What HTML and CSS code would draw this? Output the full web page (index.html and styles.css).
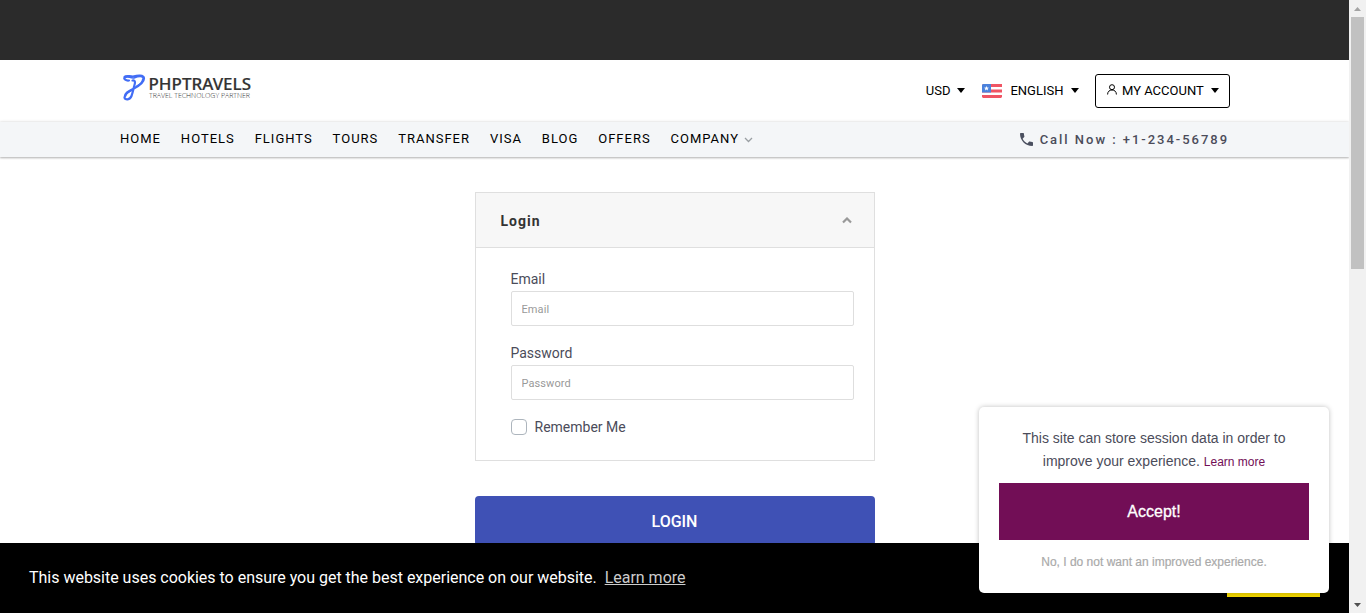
FILE: index.html
```
<!DOCTYPE html>
<html lang="en">
<head>
<meta charset="utf-8">
<title>Login</title>
<link rel="stylesheet" href="styles.css">
</head>
<body>
<div class="page">
  <div class="topbar"></div>
  <header class="header">
    <a class="logo">
      <svg width="132" height="32" viewBox="0 0 132 32">
        <g fill="none" stroke="#426df5" stroke-linecap="round" stroke-linejoin="round">
          <path stroke-width="2.200" d="M8 9.500C5 10 2.500 8 3.500 6C5 4 8 5.500 12 5.500C16 4.500 23 3.500 23 7.500C23 12 18 15 12 18C7 20.500 3.500 22.500 3.500 26.500C4 29.500 9 29 10.500 25C12 21 12.500 17 13.500 14C14.500 11 14 9 11.500 9.500"/>
          <path stroke-width="1.600" d="M4 6.500C7 4.500 9 7.500 13 7C17 5.500 20 4.500 22 6.500M16 15C19 13.500 21.500 10.500 21.800 8M4.500 25C5 22.500 7 21 11 19"/>
        </g>
        <text class="logo-name" x="27.500" y="19" textLength="102.500" lengthAdjust="spacingAndGlyphs">PHPTRAVELS</text>
        <text class="logo-tag" x="28" y="27" textLength="101" lengthAdjust="spacingAndGlyphs">TRAVEL TECHNOLOGY PARTNER</text>
      </svg>
    </a>
    <div class="tools">
      <span class="currency">USD <i class="caret"></i></span>
      <span class="language">
        <svg class="flag" width="20" height="14" viewBox="0 0 20 14"><rect width="20" height="14" rx="1" fill="#fff"/><path fill="#f05564" d="M1 0h19v3H0V1zM0 5.500h20v3H0zM0 11h20v2l-1 1H1l-1-1z"/><path fill="#4b82dc" d="M1 0h8v8.500H0V1z"/><path fill="#fff" d="M4.500 2l.7 1.600 1.800.1-1.400 1.100.5 1.700-1.600-1-1.600 1 .5-1.700L2 3.700l1.800-.1z"/></svg>
        ENGLISH <i class="caret"></i>
      </span>
      <a class="account">
        <svg width="10" height="12" viewBox="0 0 10 12" fill="none" stroke="#000"><circle cx="5" cy="3.200" r="2.500"/><path d="M.6 10.500C.6 7.500 2.500 6 5 6s4.400 1.500 4.400 4.500"/></svg>
        MY ACCOUNT <i class="caret"></i>
      </a>
    </div>
  </header>
  <nav class="nav">
    <div class="menu">
      <a>HOME</a><a>HOTELS</a><a>FLIGHTS</a><a>TOURS</a><a>TRANSFER</a><a>VISA</a><a>BLOG</a><a>OFFERS</a>
      <a>COMPANY<svg class="chevron" width="9" height="6" viewBox="0 0 9 6" fill="none" stroke="#9a9fa3" stroke-width="1.300"><path d="M1 1l3.500 3.500L8 1"/></svg></a>
    </div>
    <div class="phone">
      <svg width="14" height="14" viewBox="3 3 18 18" fill="#4b5060"><path d="M6.620 10.790c1.440 2.830 3.760 5.140 6.590 6.590l2.200-2.200c.27-.27.67-.36 1.020-.24 1.120.37 2.330.57 3.570.57.55 0 1 .45 1 1V20c0 .55-.45 1-1 1C10.610 21 3 13.390 3 4c0-.55.45-1 1-1h3.500c.55 0 1 .45 1 1 0 1.250.2 2.450.57 3.570.11.35.03.74-.25 1.020z"/></svg>
      Call Now : +1-234-56789
    </div>
  </nav>
  <main class="main">
    <form class="login">
      <section class="card">
        <div class="card-head">
          <h1>Login</h1>
          <svg width="10" height="7" viewBox="0 0 10 7" fill="none" stroke="#999" stroke-width="2.200"><path d="M1 5.500l4-4 4 4"/></svg>
        </div>
        <div class="card-body">
          <label for="email">Email</label>
          <input id="email" class="field" type="text" placeholder="Email">
          <label for="password">Password</label>
          <input id="password" class="field" type="password" placeholder="Password">
          <div class="remember"><span class="box"></span>Remember Me</div>
        </div>
      </section>
      <button class="submit" type="button">LOGIN</button>
    </form>
  </main>
  <div class="cookie-bar">
    <span class="cookie-text">This website uses cookies to ensure you get the best experience on our website. <a>Learn more</a></span>
    <span class="got-it"></span>
  </div>
  <aside class="consent">
    <p>This site can store session data in order to improve your experience. <a>Learn more</a></p>
    <button class="accept" type="button">Accept!</button>
    <a class="decline">No, I do not want an improved experience.</a>
  </aside>
</div>
<div class="scrollbar">
  <svg width="17" height="17"><path fill="#a3a3a3" d="M5 11h7L8.500 7z"/></svg>
  <div class="thumb"></div>
  <svg class="down" width="17" height="17"><path fill="#505050" d="M5 7h7l-3.500 4z"/></svg>
</div>
</body>
</html>
```
FILE: styles.css
```
* { box-sizing: border-box; }
body {
  margin: 0;
  height: 613px;
  display: flex;
  overflow: hidden;
  background: #fff;
  font-family: Roboto, sans-serif;
  color: #4b4c5a;
}
.page { position: relative; width: 1349px; height: 613px; overflow: hidden; }
.topbar { height: 60px; background: #2b2b2b; }
.header {
  height: 62px;
  padding: 0 119px 1px 121px;
  display: flex;
  justify-content: space-between;
  align-items: center;
}
.logo { height: 32px; margin-top: -7px; }
.logo svg { display: block; }
.logo-name { font: 500 17px "Noto Sans", sans-serif; fill: #333; stroke: #333; stroke-width: .2px; }
.logo-tag { font: 300 7px "Open Sans", sans-serif; fill: #333; }
.tools { display: flex; align-items: center; font-size: 13px; color: #000; }
.currency, .language, .account { display: flex; align-items: center; }
.caret {
  border: 4px solid transparent;
  border-top: 5px solid #000;
  border-bottom: 0;
  margin-left: 7px;
}
.currency { margin-right: 16.500px; }
.flag { margin-right: 8.500px; }
.language { margin-right: 16.500px; }
.account {
  width: 135px;
  height: 34px;
  padding-left: 11px;
  border: 1px solid #000;
  border-radius: 3px;
}
.account svg { margin: -2px 5px 0 0; }
.nav {
  height: 35px;
  padding: 0 120px;
  display: flex;
  justify-content: space-between;
  align-items: center;
  background: #f4f6f8;
  box-shadow: 0 0 3px rgba(0, 0, 0, .15), 0 1px 2px rgba(0, 0, 0, .25);
}
.menu { display: flex; gap: 19.900px; padding-bottom: 2px; font-size: 13px; letter-spacing: 1px; color: #000; }
.chevron { margin-left: 5px; }
.phone {
  display: flex;
  align-items: center;
  gap: 7px;
  font-size: 13px;
  font-weight: 500;
  letter-spacing: 1.970px;
}
.phone svg { width: 13px; height: 13px; }
.main { display: flex; justify-content: center; padding-top: 35px; }
.login { width: 400px; }
.card { height: 269px; border: 1px solid #dfdfdf; }
.card-head {
  height: 55px;
  padding: 0 22px 0 25px;
  display: flex;
  align-items: center;
  justify-content: space-between;
  background: #f7f7f7;
  border-bottom: 1px solid #dfdfdf;
}
.card-head h1 { margin: 2px 0 0; font-size: 14px; font-weight: 700; letter-spacing: 1px; color: #333; }
.card-body { padding: 20px 20px 0 35px; font-size: 14px; }
.card-body label { display: block; height: 23px; line-height: 23px; }
.field {
  display: block;
  width: 343px;
  height: 35px;
  margin: 0 0 16px;
  padding: 2px 10px 0;
  border: 1px solid #dedede;
  border-radius: 2px;
  font: 11px Roboto, sans-serif;
  letter-spacing: .1px;
}
.field::placeholder { color: #999; }
.remember { display: flex; align-items: center; gap: 8px; height: 22px; }
.box { width: 16px; height: 16px; border: 1px solid #adb5bd; border-radius: 4px; }
.submit {
  display: block;
  width: 400px;
  height: 50px;
  margin-top: 35px;
  border: 0;
  border-radius: 4px;
  background: #3f51b5;
  color: #fff;
  font: 500 16px Roboto, sans-serif;
}
.cookie-bar {
  position: absolute;
  left: 0;
  right: 0;
  bottom: 0;
  height: 70px;
  padding: 0 29px;
  display: flex;
  align-items: center;
  justify-content: space-between;
  background: #000;
  color: #fff;
  font-size: 16px;
}
.cookie-text { padding-bottom: 2px; letter-spacing: -.015px; }
.cookie-bar a { margin-left: 4px; text-decoration: underline; color: #ccc; }
.got-it { width: 93px; height: 38px; background: #f1d600; }
.consent {
  position: absolute;
  left: 979px;
  top: 407px;
  width: 350px;
  height: 186px;
  padding: 20px;
  background: #fff;
  border-radius: 5px;
  box-shadow: 0 0 5px rgba(0, 0, 0, .25);
  text-align: center;
  font-family: "Liberation Sans", sans-serif;
}
.consent p { margin: 0 0 10px; height: 46px; font-size: 14px; line-height: 23px; }
.consent p a { font-size: 12px; line-height: 1; color: #720e56; }
.accept {
  display: block;
  width: 310px;
  height: 57px;
  border: 0;
  background: #720e56;
  color: #fff;
  font: 16px "Liberation Sans", sans-serif;
  -webkit-text-stroke: .3px #fff;
}
.decline {
  display: block;
  margin-top: 15px;
  font-size: 12px;
  line-height: 14px;
  color: #aaa;
  -webkit-text-stroke: .2px #aaa;
}
.scrollbar {
  width: 17px;
  height: 613px;
  display: flex;
  flex-direction: column;
  background: #f1f1f1;
}
.thumb { width: 13px; height: 252px; margin-left: 2px; background: #c1c1c1; }
.down { margin-top: auto; }
```
